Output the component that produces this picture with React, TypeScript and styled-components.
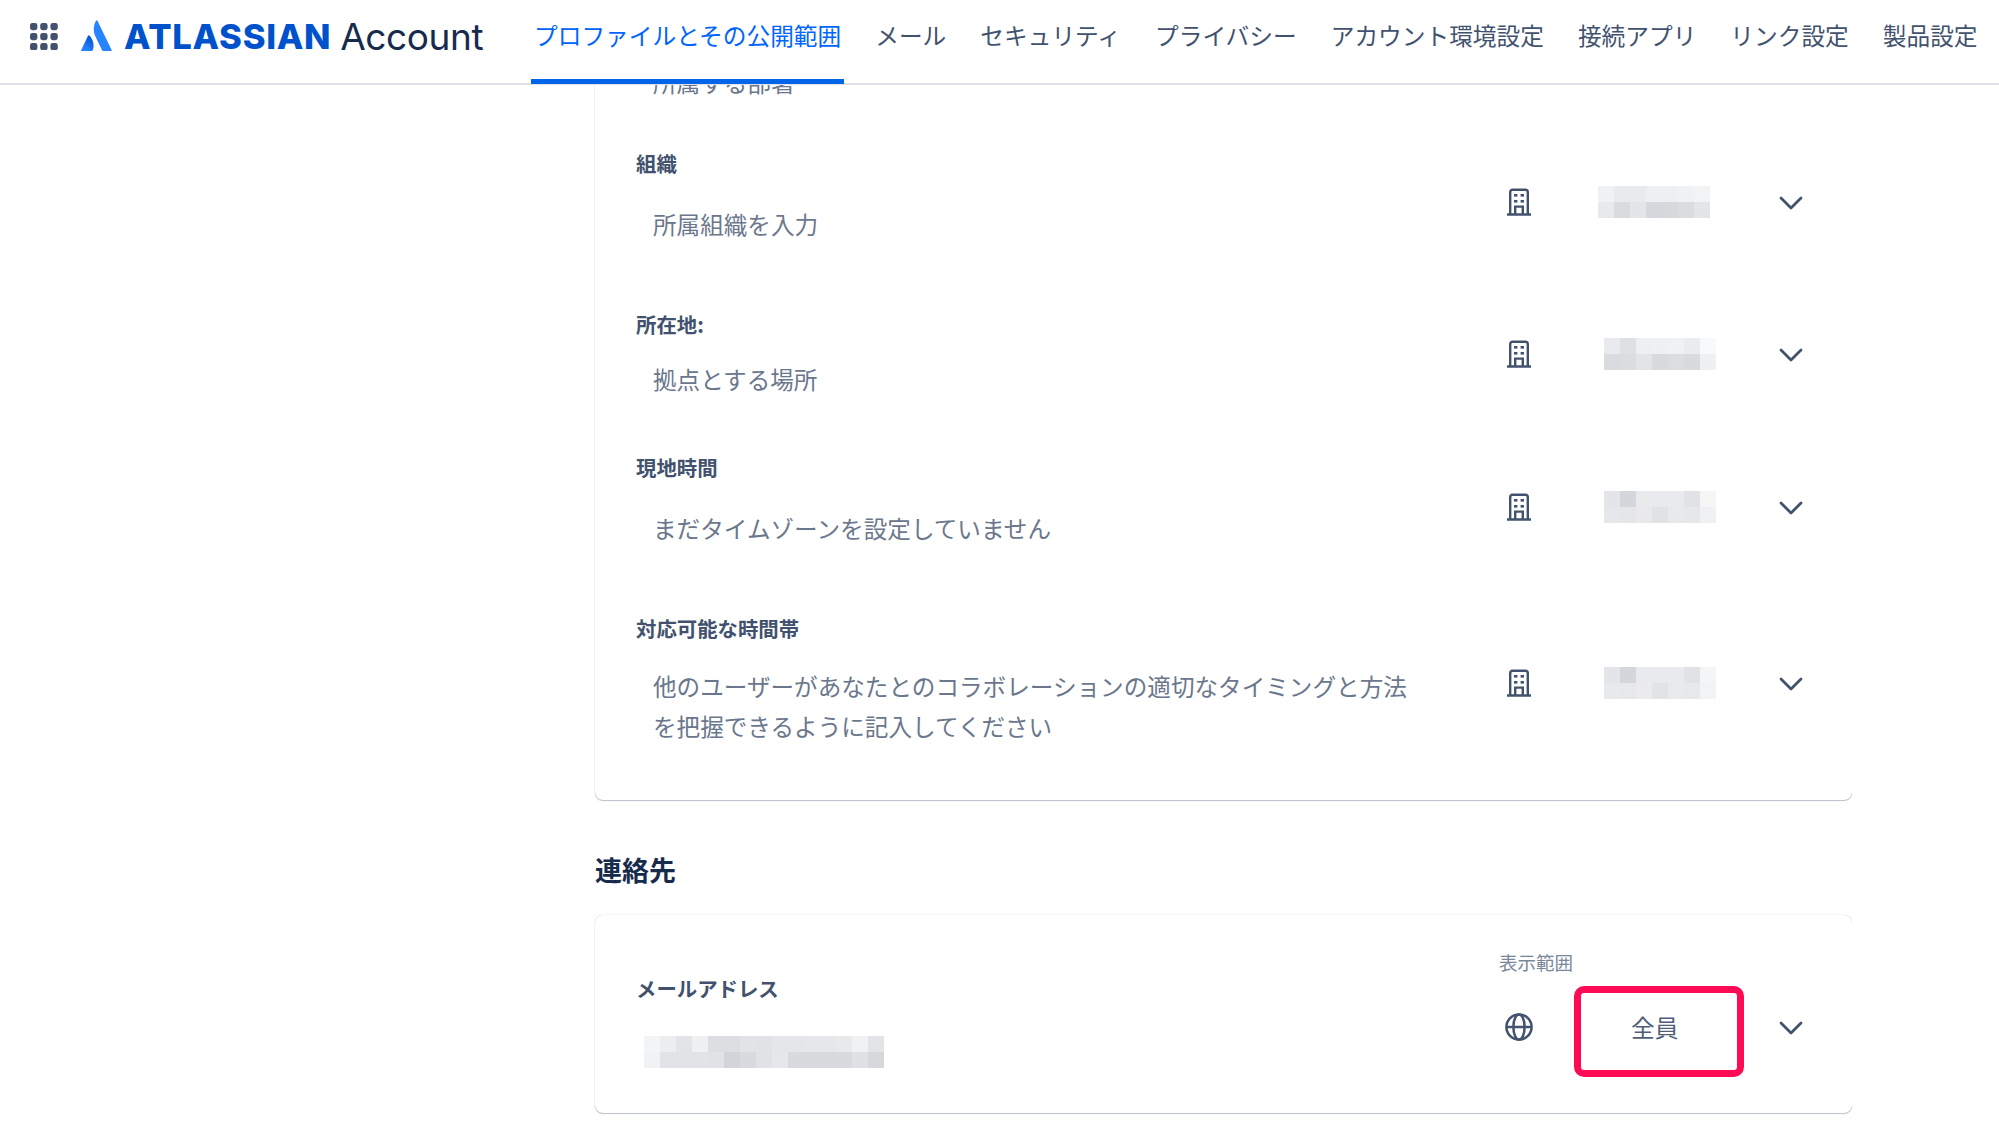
import React from 'react'
import styled, { createGlobalStyle } from 'styled-components';

const tabs = ['メール', 'セキュリティ', 'プライバシー', 'アカウント環境設定', '接続アプリ', 'リンク設定', '製品設定'];

const mosaicA = ['#f0f1f3', '#e9eaec', '#e9eaec', '#eeeff1', '#eeeff1', '#f0f1f2', '#f2f3f4', '#e8e9ec', '#d9dbdf', '#e4e5e8', '#d5d7dc', '#d6d8dc', '#dadce0', '#e4e5e8'];
const mosaicB = ['#e9eaed', '#dfe0e4', '#eeeff1', '#eff0f2', '#f0f1f3', '#ebecee', '#f8f9fa', '#d9dbdf', '#dadce0', '#e3e4e7', '#d8dade', '#dbdde0', '#d8dade', '#eff0f2'];
const mosaicC = ['#e4e5e8', '#d3d6db', '#e9eaec', '#e9eaed', '#e9eaed', '#e1e2e5', '#f6f6f7', '#e6e7ea', '#e5e6e8', '#e9e9eb', '#e1e2e5', '#e8e9eb', '#e6e7e9', '#f0f1f3'];
const mosaicD = ['#e4e5e8', '#d3d6db', '#e9eaed', '#e9eaed', '#e9eaed', '#e1e2e5', '#f4f5f6', '#e8e9eb', '#e7e8ea', '#ebebed', '#e2e3e6', '#e9eaec', '#e7e8ea', '#f2f3f4'];
const mosaicEmail = [
    '#f3f4f5', '#ecedef', '#e3e4e7', '#eff0f2', '#dcdee2', '#dcdee2', '#e2e3e7', '#e1e2e6', '#e5e6e9', '#e5e6e9', '#e6e7ea', '#e6e7ea', '#e8e9eb', '#f0f1f3', '#e3e4e8',
    '#f1f2f4', '#e2e3e6', '#e2e3e6', '#e2e3e6', '#e1e2e5', '#d2d4d9', '#d8dade', '#e1e2e6', '#e6e7ea', '#d9dade', '#d9dade', '#d9dade', '#d9dade', '#e0e1e5', '#d6d8dc',
];

const GridIcon = () => (
    <svg width="28" height="27" viewBox="0 0 28 27">
        {[0, 10, 20].map((y) =>
            [0, 10.2, 20.4].map((x) => (
                <rect key={`${x}-${y}`} x={x} y={y} width="7.4" height="7.2" rx="2.4" fill="#42526E" />
            ))
        )}
    </svg>
);

const LogoMark = () => (
    <svg width="31" height="32" viewBox="0 0 31 32">
        <defs>
            <linearGradient id="logoGrad" x1="13" y1="18" x2="4" y2="31" gradientUnits="userSpaceOnUse">
                <stop offset="0" stopColor="#0052CC" />
                <stop offset="0.9" stopColor="#2684FF" />
            </linearGradient>
        </defs>
        <path d="M8.4 15.6Q7.7 14.7 7 15.7L.2 30Q-.2 31 .9 31H10.6Q11.3 31 11.6 30.4C13.7 26 12.4 19.8 8.4 15.6Z" fill="url(#logoGrad)" />
        <path d="M15 .8C12.3 5.5 12 11.7 14.7 17L21.2 30.4Q21.5 31 22.2 31H30Q31 31 30.6 30L16.6 .9Q15.8 -.4 15 .8Z" fill="#2684FF" />
    </svg>
);

const BuildingIcon = () => (
    <svg width="24" height="28" viewBox="0 0 24 28" fill="none" stroke="#42526E" strokeWidth="2.4">
        <path d="M3.2 26V4.2Q3.2 1.8 5.6 1.8H18.4Q20.8 1.8 20.8 4.2V26" />
        <path d="M.5 26.5H23.5" strokeLinecap="round" />
        <path d="M8.2 26V18.6H15.8V26" />
        <rect x="7" y="6" width="3.4" height="2.6" fill="#42526E" stroke="none" />
        <rect x="13.6" y="6" width="3.4" height="2.6" fill="#42526E" stroke="none" />
        <rect x="7" y="12" width="3.4" height="2.6" fill="#42526E" stroke="none" />
        <rect x="13.6" y="12" width="3.4" height="2.6" fill="#42526E" stroke="none" />
    </svg>
);

const GlobeIcon = () => (
    <svg width="28" height="28" viewBox="0 0 28 28" fill="none" stroke="#42526E" strokeWidth="2.5">
        <circle cx="14" cy="14" r="12.6" />
        <ellipse cx="14" cy="14" rx="5.6" ry="12.6" />
        <path d="M1.4 14H26.6" />
    </svg>
);

const ChevronIcon = () => (
    <svg width="24" height="16" viewBox="0 0 24 16" fill="none" stroke="#42526E" strokeWidth="2.8" strokeLinecap="round" strokeLinejoin="round">
        <path d="M2 4L12 14L22 4" />
    </svg>
);

const Pixelated = ({ colors, columns, className }: { colors: string[]; columns: number; className?: string }) => (
    <Mosaic $columns={columns} className={className}>
        {colors.map((c, i) => (
            <Cell key={i} $color={c} />
        ))}
    </Mosaic>
);

interface RowData {
    label: string;
    lines: string;
    mosaic: string[];
    rowHeight: number;
    valueGap: number;
    controlTop: number;
    shift: number;
}

const rows: RowData[] = [
    { label: '組織', lines: '所属組織を入力', mosaic: mosaicA, rowHeight: 161, valueGap: 28, controlTop: 26, shift: 55 },
    { label: '所在地:', lines: '拠点とする場所', mosaic: mosaicB, rowHeight: 143, valueGap: 22, controlTop: 17, shift: 61 },
    { label: '現地時間', lines: 'まだタイムゾーンを設定していません', mosaic: mosaicC, rowHeight: 161, valueGap: 28, controlTop: 27, shift: 61 },
    { label: '対応可能な時間帯', lines: '他のユーザーがあなたとのコラボレーションの適切なタイミングと方法を把握できるように記入してください', mosaic: mosaicD, rowHeight: 183, valueGap: 25, controlTop: 42, shift: 61 },
];

const App = () => {
    return (
        <>
            <GlobalStyle />
            <Page>
                <Header>
                    <GridButton><GridIcon /></GridButton>
                    <LogoWrap>
                        <LogoMark />
                        <LogoName>ATLASSIAN</LogoName>
                        <LogoProduct>Account</LogoProduct>
                    </LogoWrap>
                    <TabList>
                        <Tab $active>プロファイルとその公開範囲</Tab>
                        {tabs.map((t) => (
                            <Tab key={t}>{t}</Tab>
                        ))}
                    </TabList>
                </Header>
                <Main>
                    <ProfileCard>
                        <CutValue>所属する部署</CutValue>
                        {rows.map((r) => (
                            <Row key={r.label} $height={r.rowHeight}>
                                <Info>
                                    <Label>{r.label}</Label>
                                    <Value $gap={r.valueGap}>{r.lines}</Value>
                                </Info>
                                <Controls $top={r.controlTop}>
                                    <IconSlot><BuildingIcon /></IconSlot>
                                    <Slot>
                                        <Pixelated colors={r.mosaic} columns={7} className={`shift-${r.shift}`} />
                                    </Slot>
                                    <IconSlot><ChevronIcon /></IconSlot>
                                </Controls>
                            </Row>
                        ))}
                    </ProfileCard>
                    <SectionTitle>連絡先</SectionTitle>
                    <ContactCard>
                        <EmailInfo>
                            <Label>メールアドレス</Label>
                            <EmailMosaic colors={mosaicEmail} columns={15} />
                        </EmailInfo>
                        <div>
                            <ControlsCaption>表示範囲</ControlsCaption>
                            <Controls $top={0}>
                                <IconSlot><GlobeIcon /></IconSlot>
                                <Slot>
                                    <Audience>全員</Audience>
                                    <Highlight />
                                </Slot>
                                <IconSlot><ChevronIcon /></IconSlot>
                            </Controls>
                        </div>
                    </ContactCard>
                </Main>
            </Page>
        </>
    )
}

export default App;

const GlobalStyle = createGlobalStyle`
    html, body {
        margin: 0;
        padding: 0;
        background: #fff;
    }
    body {
        font-family: "Noto Sans CJK JP", "Noto Sans", sans-serif;
        color: #42526e;
        overflow: hidden;
    }
    * {
        box-sizing: border-box;
    }
`;

const Page = styled.div`
    width: 1999px;
    height: 1130px;
    display: flex;
    flex-direction: column;
    overflow: hidden;
`;

const Header = styled.header`
    flex: none;
    height: 85px;
    display: flex;
    align-items: flex-start;
    padding-left: 30px;
    border-bottom: 2px solid #dfe1e6;
    background: #fff;
`;

const GridButton = styled.div`
    width: 51px;
    padding-top: 23px;
    display: flex;
`;

const LogoWrap = styled.div`
    width: 450px;
    height: 72px;
    display: flex;
    align-items: center;
`;

const LogoName = styled.span`
    margin-left: 12px;
    font-family: "Inter", "Liberation Sans", sans-serif;
    font-weight: 800;
    font-size: 34.6px;
    letter-spacing: 0.7px;
    color: #0052cc;
`;

const LogoProduct = styled.span`
    margin-left: 9px;
    font-family: "Inter", "Liberation Sans", sans-serif;
    font-weight: 400;
    font-size: 37px;
    letter-spacing: -0.4px;
    color: #172b4d;
`;

const TabList = styled.nav`
    display: flex;
    gap: 28px;
`;

const Tab = styled.div<{ $active?: boolean }>`
    height: 84px;
    padding: 15px 3px 0;
    font-size: 23.7px;
    line-height: 40px;
    white-space: nowrap;
    color: ${(p) => (p.$active ? '#0065ff' : '#42526e')};
    border-bottom: 5px solid ${(p) => (p.$active ? '#0065e8' : 'transparent')};
`;

const Main = styled.main`
    flex: 1;
    min-height: 0;
    overflow: hidden;
    padding-left: 595px;
    width: 1852px;
`;

const Card = styled.section`
    background: #fff;
    border-radius: 8px;
    box-shadow: 0 1px 1px rgba(9, 30, 66, 0.25), 0 0 1px rgba(9, 30, 66, 0.31);
    padding-left: 41px;
    padding-right: 37px;
`;

const ProfileCard = styled(Card)`
    margin-top: -23px;
    height: 738px;
`;

const ContactCard = styled(Card)`
    height: 198px;
    padding-top: 35px;
    display: flex;
    justify-content: space-between;
    align-items: flex-start;
`;

const CutValue = styled.div`
    padding-left: 17px;
    font-size: 23.6px;
    line-height: 40px;
    color: #6b778c;
    margin-bottom: 50px;
`;

const Row = styled.div<{ $height: number }>`
    height: ${(p) => p.$height}px;
    display: flex;
    justify-content: space-between;
    align-items: flex-start;
`;

const Info = styled.div`
    min-width: 0;
`;

const EmailInfo = styled.div`
    padding-top: 27px;
`;

const Label = styled.div`
    margin-top: -1px;
    padding-bottom: 1px;
    font-size: 20.4px;
    line-height: 24px;
    font-weight: 700;
    color: #42526e;
`;

const Value = styled.div<{ $gap: number }>`
    margin-top: ${(p) => p.$gap}px;
    padding-left: 17px;
    width: 790px;
    font-size: 23.6px;
    line-height: 40px;
    color: #6b778c;
`;

const Controls = styled.div<{ $top: number }>`
    flex: none;
    margin-top: ${(p) => p.$top}px;
    width: 320px;
    height: 48px;
    display: flex;
    align-items: center;
`;

const ControlsCaption = styled.div`
    padding-left: 4px;
    margin-bottom: 29px;
    font-size: 18.5px;
    line-height: 24px;
    color: #7a869a;
`;

const IconSlot = styled.div`
    flex: none;
    width: 48px;
    display: flex;
    justify-content: center;
`;

const Slot = styled.div`
    position: relative;
    flex: none;
    width: 224px;
    .shift-55 {
        margin-left: 55px;
    }
    .shift-61 {
        margin-left: 61px;
    }
`;

const Mosaic = styled.div<{ $columns: number }>`
    display: grid;
    width: max-content;
    grid-template-columns: repeat(${(p) => p.$columns}, 16px);
    grid-auto-rows: 16px;
`;

const Cell = styled.div<{ $color: string }>`
    background: ${(p) => p.$color};
`;

const EmailMosaic = styled(Pixelated)`
    margin-top: 35px;
    margin-left: 8px;
`;

const Audience = styled.div`
    margin-left: 88px;
    font-size: 23.7px;
    line-height: 40px;
    color: #505f79;
`;

const Highlight = styled.div`
    position: absolute;
    left: 31px;
    top: -21px;
    width: 170px;
    height: 91px;
    border: 7px solid #ff0a54;
    border-radius: 10px;
`;

const SectionTitle = styled.h2`
    margin: 0;
    padding-top: 50px;
    height: 115px;
    font-size: 27px;
    line-height: 40px;
    font-weight: 700;
    color: #172b4d;
`;
